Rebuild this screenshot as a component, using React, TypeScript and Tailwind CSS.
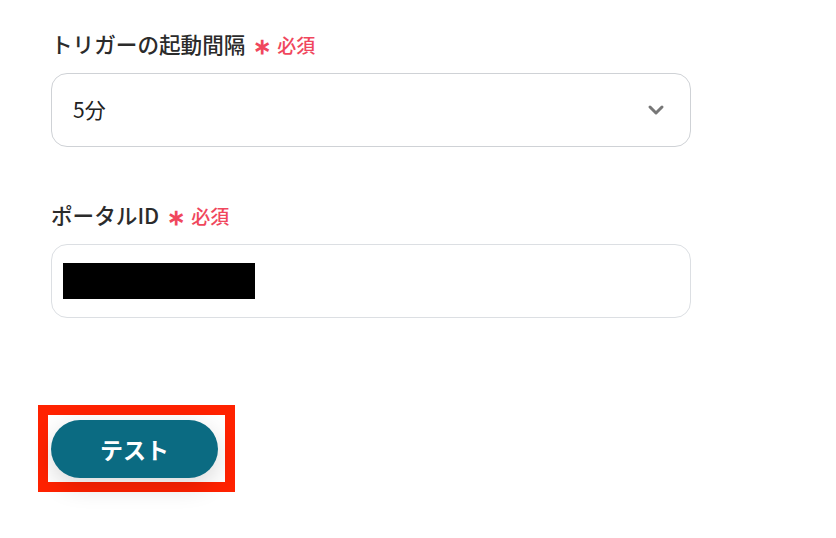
import { ChevronDown } from "lucide-react";

const font = {
  fontFamily: '"Noto Sans CJK JP", "Noto Sans", sans-serif',
};

function Label({ text }: { text: string }) {
  return (
    <div className="flex items-center h-[30px] text-[21.6px] font-medium text-[#2b2b2b] leading-none">
      <span>{text}</span>
      <span className="ml-[8px] text-[#f0475d] text-[22px] font-bold">∗</span>
      <span className="ml-[6px] text-[#f0475d] text-[19px] font-medium">必須</span>
    </div>
  );
}

export default function App() {
  return (
    <div className="w-[836px] h-[538px] bg-white pl-[51px] pt-[29px]" style={font}>
      <Label text="トリガーの起動間隔" />
      <div className="mt-[14px] w-[640px] h-[74px] rounded-[16px] border border-[#cfd2d6] flex items-center justify-between pl-[21px] pr-[22px]">
        <span className="text-[21px] text-[#222]">5分</span>
        <ChevronDown size={24} strokeWidth={3} className="text-[#777]" />
      </div>

      <div className="mt-[53px]">
        <Label text="ポータルID" />
      </div>
      <div className="mt-[14px] w-[640px] h-[74px] rounded-[16px] border border-[#dcdfe3] flex items-center pl-[11px]">
        <div className="w-[192px] h-[36px] bg-black" />
      </div>

      <div className="mt-[87px] -ml-[13px] w-[197px] h-[87px] border-[10px] border-[#ff2200] pl-[3px] pt-[5px] bg-white">
        <button className="w-[167px] h-[58px] rounded-full bg-[#0b6b82] text-white text-[23px] font-semibold shadow-[0_8px_24px_rgba(0,0,0,0.15)]">
          テスト
        </button>
      </div>
    </div>
  );
}
